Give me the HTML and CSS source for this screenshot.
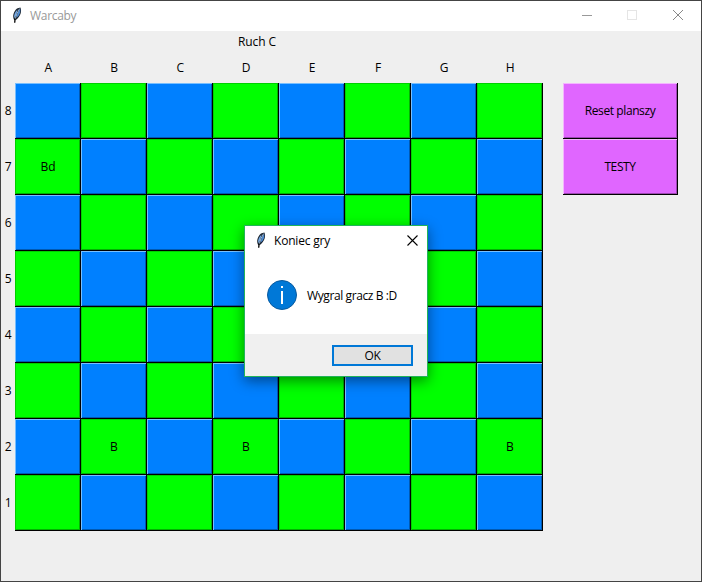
FILE: index.html
```html
<!DOCTYPE html>
<html lang="pl">
<head>
<meta charset="utf-8">
<title>Warcaby</title>
<link rel="stylesheet" href="styles.css">
</head>
<body>
<svg class="defs" width="0" height="0" aria-hidden="true">
  <symbol id="feather" viewBox="0 0 10 16">
    <path d="M2.2 13C.2 10 1.200 4.800 5 1.600L8.400.5C10 4 8.600 9 4.600 12.400Z" fill="#16202c"/>
    <path d="M2.300 11.200C1.500 8.600 2.800 5 5.600 2.500L4 8.500Z" fill="#75a9e4"/>
    <path d="M4.400 10.800L5.800 5.800 8.200 1.700C8.900 5 7.500 8.600 4.400 10.800Z" fill="#4f8bd4"/>
    <path d="M7.600 1.600L5 6.500 3.200 12" fill="none" stroke="#b9d8f5" stroke-width=".8"/>
    <path d="M3.100 11.500L2.700 15.800" fill="none" stroke="#000" stroke-width="1.300"/>
  </symbol>
</svg>
<div class="window">
  <header class="titlebar">
    <svg class="feather" width="10" height="16"><use href="#feather"/></svg>
    <span class="title">Warcaby</span>
    <svg class="controls" width="102" height="12" shape-rendering="crispEdges">
      <path d="M0 5.500H10" stroke="#999"/>
      <rect x="45.500" y=".5" width="9" height="9" fill="none" stroke="#e5e5e5"/>
      <path d="M91 0L101 10M101 0L91 10" stroke="#888" shape-rendering="auto"/>
    </svg>
  </header>
  <main class="content">
    <div class="turn">Ruch C</div>
    <div class="columns"><span>A</span><span>B</span><span>C</span><span>D</span><span>E</span><span>F</span><span>G</span><span>H</span></div>
    <div class="play">
      <div class="rows"><span>8</span><span>7</span><span>6</span><span>5</span><span>4</span><span>3</span><span>2</span><span>1</span></div>
      <div class="board" id="board"></div>
      <div class="actions">
        <button class="action">Reset planszy</button>
        <button class="action">TESTY</button>
      </div>
    </div>
  </main>
  <section class="dialog">
    <div class="dialog-title">
      <svg class="feather" width="10" height="16"><use href="#feather"/></svg>
      <span>Koniec gry</span>
      <svg class="dialog-close" width="11" height="11"><path d="M.5.5L10.500 10.500M10.500.5L.5 10.500" stroke="#000" stroke-width="1.100"/></svg>
    </div>
    <div class="message">
      <svg width="30" height="30"><circle cx="15" cy="15" r="14.500" fill="#0078d7" stroke="#0a5a9e"/><path d="M14 6h2v2h-2zM14 11h2v13h-2z" fill="#fff"/></svg>
      <span>Wygral gracz B :D</span>
    </div>
    <footer class="dialog-footer"><button class="ok">OK</button></footer>
  </section>
</div>
<script src="board.js"></script>
</body>
</html>
```
FILE: styles.css
```css
* { box-sizing: border-box; }
body {
  margin: 0;
  font: 12px/16px "Open Sans", "Noto Sans", sans-serif;
  letter-spacing: -0.4px;
  color: #000;
}
button { font: inherit; letter-spacing: inherit; color: inherit; padding: 0; border-radius: 0; }
.defs { position: absolute; }
.window {
  position: relative;
  width: 702px;
  height: 582px;
  border: 1px solid #444;
  background: #efefef;
  overflow: hidden;
}
.titlebar {
  display: flex;
  height: 30px;
  padding: 6px 17px 0 11px;
  background: #fff;
  color: #999;
}
.title { margin: 1px 0 0 8px; letter-spacing: -0.3px; }
.controls { margin: 3px 0 0 auto; }
.turn { height: 25px; padding: 3px 0 0 237px; letter-spacing: -0.1px; }
.columns {
  display: grid;
  grid-template-columns: repeat(8, 66px);
  height: 27px;
  padding: 4px 0 0 14px;
  text-align: center;
}
.play { display: flex; }
.rows { width: 14px; }
.rows span { display: block; height: 56px; line-height: 56px; text-align: center; }
.board { display: grid; grid-template-columns: repeat(8, 66px); grid-auto-rows: 56px; }
.cell {
  padding-left: 1px;
  border-right: 1px solid #000;
  border-bottom: 1px solid #000;
  line-height: 55px;
  letter-spacing: 0;
  text-align: center;
}
.blue { background: #0080ff; box-shadow: inset 1px 1px #78bfff, inset -1px -1px #0059b2; }
.green { background: #00ff00; box-shadow: inset 1px 1px #00d000, inset -1px -1px #00b200; }
.actions { margin-left: 20px; }
.action {
  display: block;
  width: 115px;
  height: 56px;
  border: 0 solid #000;
  border-width: 0 1px 1px 0;
  background: #e066ff;
  box-shadow: inset 1px 1px #f4b5ff, inset -1px -1px #9c47b2;
}
.dialog {
  position: absolute;
  left: 243px;
  top: 224px;
  width: 184px;
  height: 152px;
  border: 1px solid #22b45a;
  background: #fff;
  box-shadow: 0 4px 13px rgba(0, 0, 0, .45);
}
.dialog-title { display: flex; height: 54px; padding: 5px 9.500px 0 11px; }
.dialog-title .feather { margin-top: 1px; }
.dialog-title span { margin: 2px 0 0 8px; letter-spacing: -0.2px; }
.dialog-close { margin: 4px 0 0 auto; }
.message { display: flex; gap: 10px; height: 54px; padding-left: 22px; }
.message span { margin-top: 8px; }
.dialog-footer { display: flex; justify-content: flex-end; height: 42px; padding: 11px 14px 0; background: #f0f0f0; }
.ok { width: 81px; height: 21px; border: 2px solid #0078d7; background: #e1e1e1; line-height: 17px; }
```
FILE: board.js
```javascript
const pieces = { "1,0": "Bd", "6,1": "B", "6,3": "B", "6,7": "B" };
const board = document.getElementById("board");
for (let row = 0; row < 8; row++) {
  for (let col = 0; col < 8; col++) {
    const cell = document.createElement("div");
    cell.className = "cell " + ((row + col) % 2 ? "green" : "blue");
    cell.textContent = pieces[row + "," + col] || "";
    board.append(cell);
  }
}
```
